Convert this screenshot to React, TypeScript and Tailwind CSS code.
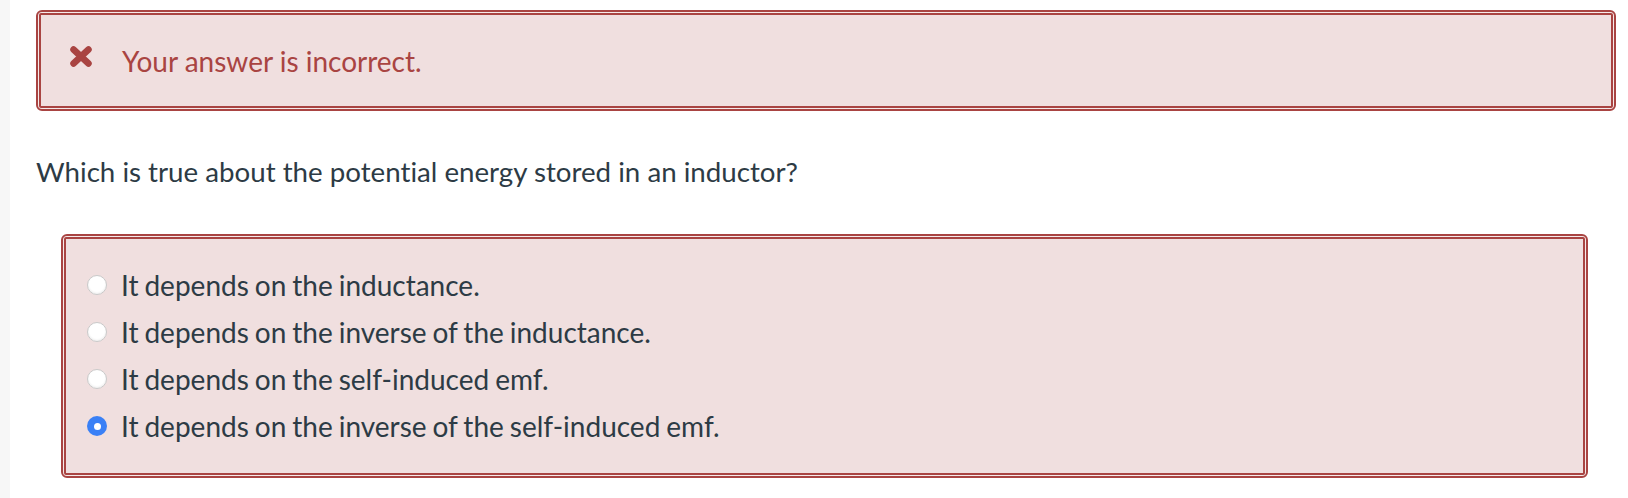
import React from 'react';

const OPTIONS = [
  { text: 'It depends on the inductance.', checked: false },
  { text: 'It depends on the inverse of the inductance.', checked: false },
  { text: 'It depends on the self-induced emf.', checked: false },
  { text: 'It depends on the inverse of the self-induced emf.', checked: true },
];

function Radio({ checked }: { checked: boolean }) {
  if (checked) {
    return (
      <span className="flex h-[20px] w-[20px] shrink-0 items-center justify-center rounded-full bg-[#3a80f6]">
        <span className="h-[7px] w-[7px] rounded-full bg-white" />
      </span>
    );
  }
  return <span className="h-[20px] w-[20px] shrink-0 rounded-full border border-[#c9c9c9] bg-white shadow-[inset_0_-1px_2px_rgba(0,0,0,0.07)]" />;
}

export default function App() {
  return (
    <div
      className="flex min-h-[498px] bg-white text-[#2d3b45] [font-variant-ligatures:none]"
      style={{ fontFamily: 'Lato, "Open Sans", sans-serif' }}
    >
      <div className="w-[10px] shrink-0 bg-[#f7f7f7]" />
      <div className="flex-1 pl-[26px] pr-[12px] pt-[10px]">
        {/* alert */}
        <div className="rounded-[6px] border-2 border-[#a94442] bg-[#f6eaea] p-px">
          <div className="flex items-start rounded-[2px] border-2 border-[#a94442] bg-[#f0dfdf] pl-[28px] pt-[30px] pb-[27px]">
            <svg width="24" height="23" viewBox="0 0 24 23" className="shrink-0">
              <path d="M4.5 4.5 L19.5 18.5 M19.5 4.5 L4.5 18.5" stroke="#a94442" strokeWidth="6.5" strokeLinecap="round" />
            </svg>
            <span className="ml-[29px] text-[28px] leading-[1.2] text-[#a94442]">Your answer is incorrect.</span>
          </div>
        </div>

        <p className="mt-[44px] text-[27.7px] leading-[1.2]">
          Which is true about the potential energy stored in an inductor?
        </p>

        <div className="ml-[25px] mr-[28px] mt-[46px] rounded-[6px] border-2 border-[#a94442] bg-[#f6eaea] p-px">
          <div className="flex flex-col rounded-[2px] border-2 border-[#a94442] bg-[#f0dfdf] pl-[21px] pt-[23px] pb-[23px]">
            {OPTIONS.map(o => (
              <label key={o.text} className="flex h-[47px] items-center gap-[14px]">
                <Radio checked={o.checked} />
                <span className="text-[28px] leading-[1.2] [word-spacing:-1.2px]">{o.text}</span>
              </label>
            ))}
          </div>
        </div>
      </div>
    </div>
  );
}
